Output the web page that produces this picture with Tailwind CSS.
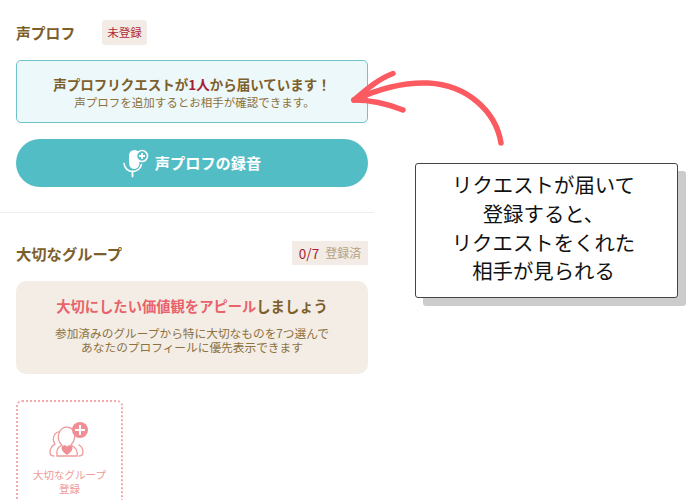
<!DOCTYPE html>
<html lang="ja">
<head>
<meta charset="utf-8">
<script src="https://cdn.jsdelivr.net/npm/@tailwindcss/browser@4"></script>
</head>
<body class="bg-white">
<div class="relative w-[700px] h-[500px] overflow-hidden bg-white font-['Noto_Sans_CJK_JP','Noto_Sans',sans-serif] text-[#7d5f2c]">
  <div class="w-[374px] flex flex-col">
    <section class="pl-[16px] pr-[6px] pt-[20px] pb-[25px] flex flex-col">
      <div class="flex items-center h-[25px]">
        <h2 class="w-[86px] text-[14.8px] font-bold leading-[25px] text-[#7d5f2c]">声プロフ</h2>
        <span class="w-[45px] h-[25px] rounded-[3px] bg-[#f3ece6] text-[#b02a37] text-[11.5px] leading-[25px] text-center">未登録</span>
      </div>
      <div class="mt-[15px] h-[63px] rounded-[5px] border border-[#6fc3cb] bg-[#ecf8f9] flex flex-col items-center pt-[13px]">
        <p class="text-[13.5px] font-bold leading-[20px] text-[#7d5f2c]">声プロフリクエストが<span class="text-[#a51f33]">1人</span>から届いています！</p>
        <p class="ml-[5px] text-[11.5px] leading-[16px] text-[#8d7140]">声プロフを追加するとお相手が確認できます。</p>
      </div>
      <button class="mt-[16px] h-[48px] rounded-full bg-[#52bdc5] text-white flex items-center justify-center gap-[2px]">
        <svg class="w-[30px] h-[30px] -translate-x-[2px]" viewBox="0 0 30 30" fill="none">
          <path d="M8 7.500a5.500 5.500 0 0 1 11 0c0 2-1 3-1 5s1 2.500 0 5a5 5 0 0 1-9.500 0c-.8-3-.5-7-.5-10z" fill="#fff"/>
          <path d="M3 15.500c.5 5 4.500 8 8.500 8s8-2.500 9-7" stroke="#fff" stroke-width="1.600" stroke-linecap="round"/>
          <path d="M11.500 23.500v5" stroke="#fff" stroke-width="1.800" stroke-linecap="round"/>
          <circle cx="21" cy="8" r="5.500" fill="#52bdc5" stroke="#fff" stroke-width="1.600"/>
          <path d="M21 5v6M18 8h6" stroke="#fff" stroke-width="1.800"/>
        </svg>
        <span class="text-[15.2px] font-bold leading-[24px] -translate-y-[1px]">声プロフの録音</span>
      </button>
    </section>
    <div class="h-px bg-[#eeeeee]"></div>
    <section class="pl-[16px] pr-[6px] pt-[28px] flex flex-col">
      <div class="flex items-center justify-between h-[24px]">
        <h2 class="text-[15.3px] font-bold leading-[24px] text-[#7d5f2c]">大切なグループ</h2>
        <div class="h-[24px] w-[76px] bg-[#f3ece6] flex items-center justify-center gap-[6px] leading-[24px]">
          <span class="text-[#a51f33] text-[13.5px]">0/7</span><span class="text-[#b5a27f] text-[12px]">登録済</span>
        </div>
      </div>
      <div class="mt-[16px] h-[93px] rounded-[10px] bg-[#f3ede6] flex flex-col items-center pt-[14px]">
        <p class="text-[14.3px] font-bold leading-[22px] text-[#7d5f2c]"><span class="text-[#e8636b]">大切にしたい価値観をアピール</span>しましょう</p>
        <p class="mt-[9px] text-[11.7px] leading-[14px] text-[#8d7140] text-center">参加済みのグループから特に大切なものを7つ選んで<br>あなたのプロフィールに優先表示できます</p>
      </div>
      <div class="mt-[26px] w-[107px] h-[120px] rounded-[6px] border-2 border-dotted border-[#f3abaf] flex flex-col items-center pt-[10px]">
        <svg class="w-[50px] h-[50px]" viewBox="0 0 50 50" fill="none">
          <path d="M9 44c-3 0-4-1-4-4 0-4 2-6 5-8-2-3-2-7 0-10 2-2 4-3 6-2" stroke="#ef9a9a" stroke-width="1.300" stroke-linecap="round"/>
          <path d="M34 44c3 0 4-1 4-4 0-3-1-5-4-7" stroke="#ef9a9a" stroke-width="1.300" stroke-linecap="round"/>
          <path d="M12 44c-1-5 1-9 5-11-4-3-5-9-2-14 3-5 10-5 13-1 3 4 2 11-2 15 4 2 7 6 6 11z" fill="#fff" stroke="#ef9a9a" stroke-width="1.300" stroke-linejoin="round"/>
          <path d="M22 43c-3.500-2.500-5.500-4.500-5.500-7 0-3 4-3.500 5.500-1.200 1.500-2.300 5.500-1.800 5.500 1.200 0 2.500-2 4.500-5.500 7z" fill="#ef8f95"/>
          <circle cx="35" cy="18" r="8" fill="#ef8f95"/>
          <path d="M35 13v10M30 18h10" stroke="#fff" stroke-width="2"/>
        </svg>
        <p class="mt-[6px] text-[10.5px] leading-[14px] text-[#ef9a9a] text-center">大切なグループ<br>登録</p>
      </div>
    </section>
  </div>

  <svg class="absolute left-[350px] top-[70px] w-[160px] h-[80px]" viewBox="0 0 160 80" fill="none">
    <path d="M151 73C146 42 118 15 78 13 52 12 28 19 4 30" stroke="#fb5b60" stroke-width="5.500" stroke-linecap="round"/>
    <path d="M4 30C16 20 28 9 43 3.500" stroke="#fb5b60" stroke-width="5.500" stroke-linecap="round"/>
    <path d="M4 30C20 30 38 34 53 40" stroke="#fb5b60" stroke-width="5.500" stroke-linecap="round"/>
  </svg>

  <div class="absolute left-[415px] top-[163px] w-[263px] h-[135px] rounded-[3px] border border-[#444444] bg-white shadow-[8px_8px_0_0_#cccccc] flex flex-col items-center justify-center pr-[6px] pb-[6px] text-[#111111] text-[20.4px] leading-[28.7px] text-center font-['Noto_Sans_CJK_JP',sans-serif]">
    <p>リクエストが届いて</p>
    <p>登録すると、</p>
    <p>リクエストをくれた</p>
    <p>相手が見られる</p>
  </div>
</div>
</body>
</html>
